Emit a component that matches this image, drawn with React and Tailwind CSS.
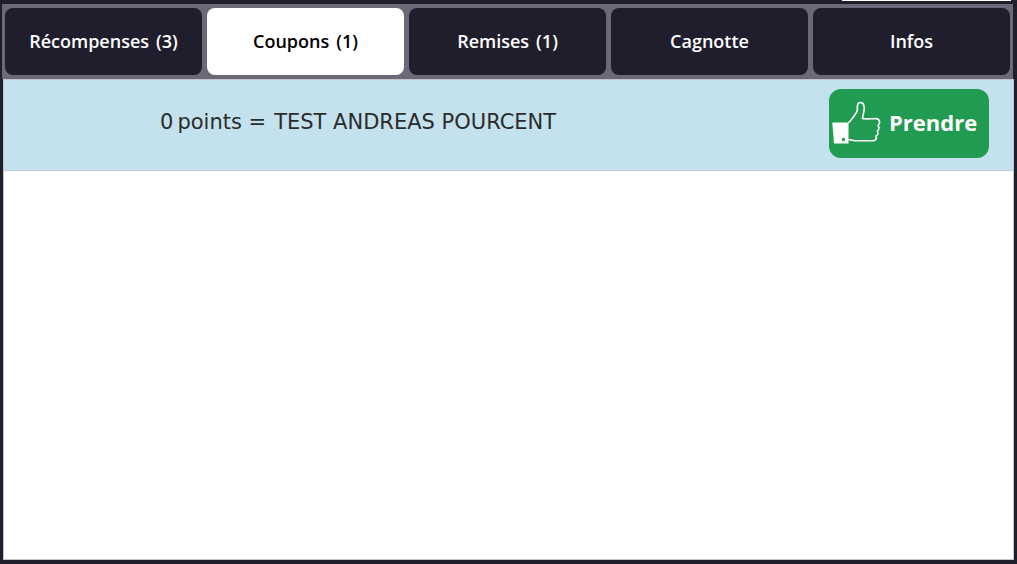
import { useState } from "react";

const tabs = [
  { id: "recompenses", label: "Récompenses", count: 3 },
  { id: "coupons", label: "Coupons", count: 1 },
  { id: "remises", label: "Remises", count: 1 },
  { id: "cagnotte", label: "Cagnotte" },
  { id: "infos", label: "Infos" },
];

const coupons = [{ id: 1, points: 0, name: "TEST ANDREAS POURCENT" }];

const ThumbIcon = () => (
  <svg width="49" height="43" viewBox="0 0 49 43" fill="none" aria-hidden="true">
    <path
      d="M16 22C18 21 19 19 21 16.500L24.500 11.500C26 9 25 7 25.500 4.500C26 0.500 31 0.500 32 5C33 9 31 13 30.500 17.500C34 18.500 39 17.500 44 17.500C48 18 48.500 22 46 24.500C47.500 26.500 47 28.500 45.300 30C46.500 32 46 34 44 35C45 38 43.500 39.700 40.500 39.700H23C20 39.700 19 38.500 16 38.500"
      stroke="white"
      strokeWidth="1.6"
      strokeLinejoin="round"
    />
    <path
      d="M0.300 21.500H16.500V42.500H2ZM11.500 36.800a1.700 1.700 0 1 0 0 3.400a1.700 1.700 0 1 0 0-3.400Z"
      fill="white"
      fillRule="evenodd"
    />
  </svg>
);

const CouponRow = ({ coupon }) => (
  <li className="flex items-start justify-between border-b border-[#cbcdd6] bg-[#c4e1ee] pt-2 pr-6 pb-3 pl-39">
    <p className="flex pt-5 font-['DejaVu_Sans',sans-serif] text-[21px] leading-7 text-[#2b2b2b]">
      <span className="mr-1">{coupon.points}</span>
      <span className="mr-2">points =</span>
      <span>{coupon.name}</span>
    </p>
    <button
      type="button"
      className="mt-px flex h-[69px] w-40 items-center gap-2 rounded-xl bg-[#229b52] pb-[2px] pl-[3px] text-[22px] font-bold text-white"
    >
      <ThumbIcon />
      Prendre
    </button>
  </li>
);

const App = () => {
  const [active, setActive] = useState("coupons");

  return (
    <div className="flex min-h-screen flex-col bg-[#201e2d] pr-[3px] pb-1 pl-[2px] font-['Open_Sans',sans-serif]">
      <div className="flex h-1 justify-end pr-[3px]">
        <div className="h-px w-[169px] bg-white" />
      </div>
      <nav className="mr-px grid grid-cols-5 gap-[5px] bg-[#6b6878] px-[3px] py-1">
        {tabs.map((tab) => (
          <button
            key={tab.id}
            type="button"
            onClick={() => setActive(tab.id)}
            className={`flex h-[67px] items-center justify-center gap-[7px] rounded-lg pb-[2px] text-lg font-semibold ${
              active === tab.id ? "bg-white text-black" : "bg-[#201e2d] text-white"
            }`}
          >
            <span>{tab.label}</span>
            {tab.count && <span>({tab.count})</span>}
          </button>
        ))}
      </nav>
      <main className="ml-px flex-1 border border-[#c3c2cd] bg-white">
        {active === "coupons" && (
          <ul>
            {coupons.map((coupon) => (
              <CouponRow key={coupon.id} coupon={coupon} />
            ))}
          </ul>
        )}
      </main>
    </div>
  );
};

export default App;
